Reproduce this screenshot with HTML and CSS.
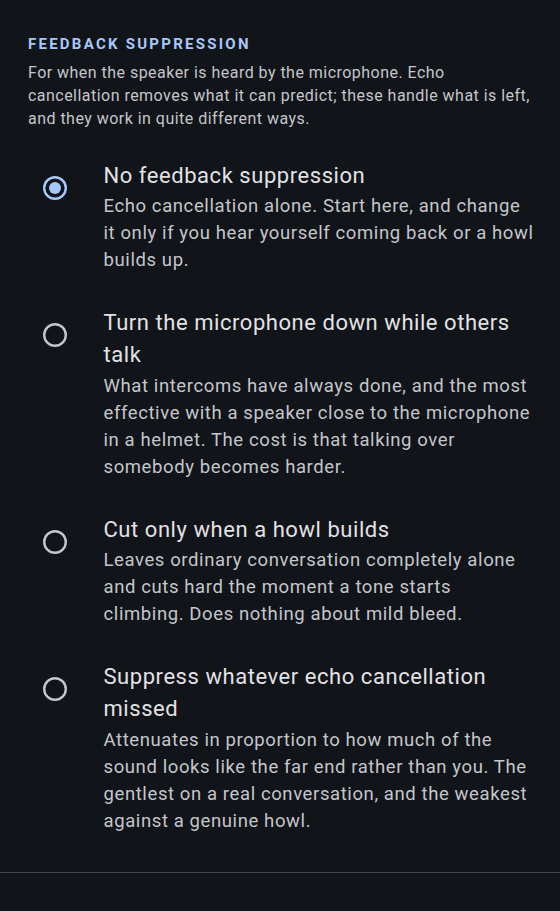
FILE: index.html
```html
<!DOCTYPE html>
<html lang="en">
<head>
<meta charset="utf-8">
<title>Feedback suppression</title>
<link rel="stylesheet" href="styles.css">
</head>
<body>
<main class="page">
  <section class="section">
    <h2 class="heading">FEEDBACK SUPPRESSION</h2>
    <p class="intro">For when the speaker is heard by the microphone. Echo cancellation removes what it can predict; these handle what is left, and they work in quite different ways.</p>
    <div class="options" role="radiogroup">
      <div class="option" role="radio" aria-checked="true">
        <svg class="radio" viewBox="0 0 24 24" width="24" height="24"><circle cx="12" cy="12" r="10.8" class="ring on"/><circle cx="12" cy="12" r="6" class="dot"/></svg>
        <div class="text">
          <div class="title">No feedback suppression</div>
          <div class="desc">Echo cancellation alone. Start here, and change it only if you hear yourself coming back or a howl builds up.</div>
        </div>
      </div>
      <div class="option" role="radio" aria-checked="false">
        <svg class="radio" viewBox="0 0 24 24" width="24" height="24"><circle cx="12" cy="12" r="10.8" class="ring"/></svg>
        <div class="text">
          <div class="title">Turn the microphone down while others talk</div>
          <div class="desc">What intercoms have always done, and the most effective with a speaker close to the microphone in a helmet. The cost is that talking over somebody becomes harder.</div>
        </div>
      </div>
      <div class="option" role="radio" aria-checked="false">
        <svg class="radio" viewBox="0 0 24 24" width="24" height="24"><circle cx="12" cy="12" r="10.8" class="ring"/></svg>
        <div class="text">
          <div class="title">Cut only when a howl builds</div>
          <div class="desc">Leaves ordinary conversation completely alone and cuts hard the moment a tone starts climbing. Does nothing about mild bleed.</div>
        </div>
      </div>
      <div class="option" role="radio" aria-checked="false">
        <svg class="radio" viewBox="0 0 24 24" width="24" height="24"><circle cx="12" cy="12" r="10.8" class="ring"/></svg>
        <div class="text">
          <div class="title">Suppress whatever echo cancellation missed</div>
          <div class="desc">Attenuates in proportion to how much of the sound looks like the far end rather than you. The gentlest on a real conversation, and the weakest against a genuine howl.</div>
        </div>
      </div>
    </div>
  </section>
  <hr class="divider">
</main>
</body>
</html>
```
FILE: styles.css
```css
html, body {
  margin: 0;
  padding: 0;
  background: #111418;
}
body {
  font-family: Roboto, "Noto Sans", sans-serif;
  color: #e2e2e6;
  min-height: 911px;
}
.page {
  padding-top: 34px;
}
.section {
  padding: 0 24px 0 28px;
}
.heading {
  margin: 0;
  font-size: 15px;
  line-height: 20px;
  font-weight: 700;
  letter-spacing: 2.25px;
  color: #a8c7fa;
}
.intro {
  margin: 6.5px 0 0;
  font-size: 16px;
  line-height: 23px;
  color: #c4c6cc;
  letter-spacing: 0.47px;
}
.options {
  display: flex;
  flex-direction: column;
  gap: 33px;
  margin-top: 30px;
  padding-bottom: 37.5px;
}
.option {
  display: flex;
  align-items: flex-start;
  gap: 37px;
  padding-left: 14.5px;
}
.radio {
  flex: none;
  margin-top: 16px;
}
.ring {
  fill: none;
  stroke: #c4c6cc;
  stroke-width: 2.4;
}
.ring.on {
  stroke: #a8c7fa;
}
.dot {
  fill: #a8c7fa;
}
.text {
  flex: 1;
  min-width: 0;
}
.title {
  font-size: 22px;
  line-height: 32px;
  letter-spacing: 0.55px;
  color: #e2e2e6;
}
.desc {
  margin-top: 1.5px;
  font-size: 18.5px;
  line-height: 27px;
  letter-spacing: 0.6px;
  color: #c4c6cc;
}
.divider {
  margin: 0;
  border: 0;
  height: 1px;
  background: #44474c;
}
```
